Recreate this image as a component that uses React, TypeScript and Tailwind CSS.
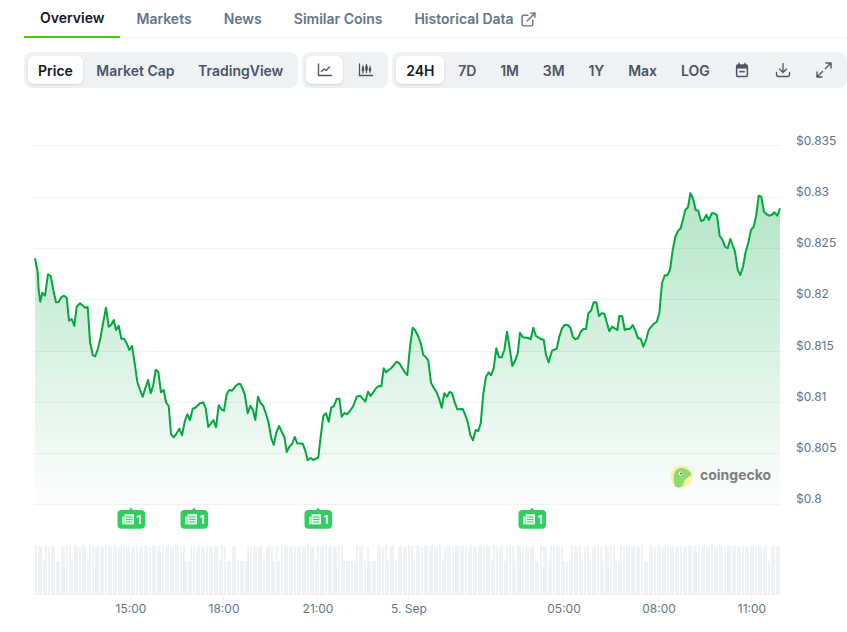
import { ExternalLink } from "lucide-react";

const part1 = [45,55,53,95,56,150,61,185,67,158,75,167,84,103,92,108,100,150,108,187,116,186,124,172,132,167,140,173,147,242,155,237,163,258,170,200,180,190,196,203,203,201,210,305,218,345,226,349,234,325,242,290,250,245,258,203,266,260,274,254,281,240,288,270,296,257,304,296,312,296,320,310,328,330,336,318,344,370,352,425,360,450,368,470,376,445,384,420,392,460,400,435,407,389,415,396,423,457,431,450,438,487,446,498,453,582,461,592,470,580,478,566,486,586,494,545,502,523,510,540,518,506,526,503,540,490,550,487,557,505,565,561,573,550,580,540,588,562,596,496,604,508,612,512,620,462,628,450,636,452,648,437,656,431,662,433,674,462,683,520,691,497,699,510,706,540,714,470,722,490,730,498,738,522,746,550,754,595,761,615,769,578,777,558,785,575,793,590,800,636,808,620,816,612,824,591];
const part2 = [22,490,38,491,46,512,53,541,62,534,70,540,85,532,92,470,100,408,108,400,116,425,124,382,132,378,140,356,148,356,155,410,163,399,171,403,180,393,190,378,200,350,210,347,226,365,234,335,242,348,258,325,265,319,274,319,281,265,288,277,296,270,304,264,320,245,328,250,344,277,352,285,360,200,368,143,376,152,384,167,392,190,400,225,408,232,415,242,423,308,431,323,439,335,447,355,455,383,463,340,471,350,479,335,486,340,494,367,502,388,518,387,526,405,534,430,541,465,549,481,557,450,565,453,572,430,580,340,588,290,596,277,603,286,611,265,619,205,627,232,635,232,643,210,651,155,659,205,667,258,675,243,683,220,690,158,698,172,715,174,722,178,730,143,738,168,754,178];
const part3 = [11,509,18,555,26,577,36,542,50,536,58,500,66,475,74,465,84,465,92,475,98,500,106,508,114,505,122,485,130,477,138,477,145,430,153,422,161,397,169,397,177,438,185,430,193,431,201,460,208,484,216,470,224,475,232,480,238,438,247,439,254,480,262,476,270,477,278,465,286,482,294,505,302,506,310,530,318,510,326,480,334,470,342,461,350,456,358,430,366,340,374,316,382,316,390,300,398,240,406,200,414,183,422,175,430,145,436,120,444,112,451,70,459,85,467,120,475,122,483,153,491,150,499,134,507,150,515,130,523,130,531,136,539,198,547,208,555,230,563,235,571,207,579,228,585,245,593,300,601,315,609,290,617,245,625,218,633,180,641,170,649,135,656,77,664,80,672,125,680,133,688,137,696,134,703,127,712,137,720,115];

// traced from 3x crops, so map back to page pixels
function toPoints(raw: number[], ox: number, oy: number) {
  const out: string[] = [];
  for (let i = 0; i < raw.length; i += 2) {
    out.push(`${(ox + raw[i] / 3).toFixed(1)},${(oy + raw[i + 1] / 3).toFixed(1)}`);
  }
  return out;
}

const linePoints = [
  ...toPoints(part1, 20, 240),
  ...toPoints(part2, 290, 280),
  ...toPoints(part3, 540, 170),
].join(" ");
const areaPoints = `35,504 ${linePoints} 780,504`;

const gridYs = [145, 197, 248, 299, 351, 402, 453, 504];
const priceLabels = [
  ["$0.835", 145],
  ["$0.83", 196],
  ["$0.825", 247],
  ["$0.82", 298],
  ["$0.815", 350],
  ["$0.81", 401],
  ["$0.805", 452],
  ["$0.8", 503],
] as const;
const timeLabels = [
  ["15:00", 130.5],
  ["18:00", 223.5],
  ["21:00", 317.5],
  ["5. Sep", 408.5],
  ["05:00", 563.5],
  ["08:00", 658.5],
  ["11:00", 751.5],
] as const;
const newsXs = [131, 194, 318, 532];

const shortBars = [
  [43, 45], [56, 60], [71, 73], [87, 89], [184, 190], [192, 193], [217, 220], [226, 230],
  [237, 246], [263, 266], [272, 274], [277, 280], [313, 317], [343, 347], [348, 355],
  [362, 367], [368, 375], [386, 388], [393, 396], [412, 414], [441, 443], [491, 493],
  [503, 506], [513, 516], [535, 540], [547, 550], [562, 571], [580, 584], [588, 591],
  [601, 605], [614, 619], [643, 647], [766, 771],
];

const volumeBars = Array.from({ length: 288 }, (_, i) => {
  const x = Math.round(35 + i * 2.59);
  const isShort = shortBars.some(([a, b]) => x >= a && x < b);
  const top = isShort ? 561 : 545 + ((i * 7) % 3);
  return { x, top };
});

function ChartLineIcon() {
  return (
    <svg width="16" height="16" viewBox="0 0 16 16" fill="none" stroke="#4b5565" strokeWidth="1.4" strokeLinecap="round" strokeLinejoin="round">
      <path d="M1.5 2v11.5h13" />
      <path d="M4.5 9.5l2.5-2.5 2 1.5 3.5-3.5" />
    </svg>
  );
}

function CandleIcon() {
  return (
    <svg width="16" height="16" viewBox="0 0 16 16" fill="none" stroke="#4b5565" strokeWidth="1.3" strokeLinecap="round">
      <path d="M1.5 2v11.5h13" />
      <path d="M5 4v7M8.5 2.5v8M12 4.5v6" />
      <path d="M5 5.5v3.5M8.5 4v4.5M12 6v3" strokeWidth="2.4" strokeLinecap="butt" />
    </svg>
  );
}

function CalendarIcon() {
  return (
    <svg width="16" height="16" viewBox="0 0 16 16" fill="none">
      <path d="M2.6 4.2a1.2 1.2 0 0 1 1.2-1.2h8.4a1.2 1.2 0 0 1 1.2 1.2v9.1a1.2 1.2 0 0 1-1.2 1.2H3.8a1.2 1.2 0 0 1-1.2-1.2z" stroke="#4b5565" strokeWidth="1.5" />
      <path d="M3 3.2h10v3.4H3z" fill="#4b5565" />
      <path d="M5 1.3v2.5M11 1.3v2.5" stroke="#4b5565" strokeWidth="1.5" strokeLinecap="round" />
      <path d="M5.2 9.6h5.6" stroke="#4b5565" strokeWidth="1.6" />
    </svg>
  );
}

function DownloadIcon() {
  return (
    <svg width="16" height="16" viewBox="0 0 16 16" fill="none" stroke="#4b5565" strokeWidth="1.3" strokeLinecap="round" strokeLinejoin="round">
      <path d="M8 1.5v8.5M4.5 7L8 10.5 11.5 7" />
      <path d="M1.5 10.5v2a2 2 0 0 0 2 2h9a2 2 0 0 0 2-2v-2" />
    </svg>
  );
}

function ExpandIcon() {
  return (
    <svg width="16" height="16" viewBox="0 0 16 16" fill="none" stroke="#4b5565" strokeWidth="1.4" strokeLinecap="round" strokeLinejoin="round">
      <path d="M10 1h5v5M15 1L9.5 6.5" />
      <path d="M6 15H1v-5M1 15l5.5-5.5" />
    </svg>
  );
}

function NewsFlag({ cx }: { cx: number }) {
  const left = cx - 13.5;
  return (
    <g>
      <rect x={left} y={510} width={27.5} height={18.7} rx={4} fill="#2fcf5f" />
      <path d={`M${cx - 2.5} 510.5 L${cx} 507.5 L${cx + 2.5} 510.5 Z`} fill="#2fcf5f" />
      <rect x={left + 7} y={514} width={9.5} height={10.5} rx={0.8} fill="#ffffff" fillOpacity={0.85} />
      <rect x={left + 4.5} y={516.5} width={2.5} height={8} rx={0.8} fill="#ffffff" fillOpacity={0.7} />
      <path d={`M${left + 8.5} 517h6.5M${left + 8.5} 519.5h6.5M${left + 8.5} 522h6.5`} stroke="#2fcf5f" strokeWidth="0.9" />
      <text x={left + 19} y={523.6} className="fill-white text-[12px] font-semibold">1</text>
    </g>
  );
}

function Tab({ label, active = false }: { label: string; active?: boolean }) {
  return (
    <div
      className={
        active
          ? "px-4 h-[38px] flex items-center whitespace-nowrap text-sm font-semibold text-[#111827] border-b-2 border-[#4bcc00]"
          : "px-4 h-[38px] flex items-center whitespace-nowrap text-sm font-semibold text-[#64748b]"
      }
    >
      {label}
    </div>
  );
}

function Segment({ label, active = false }: { label: string; active?: boolean }) {
  return (
    <div
      className={
        active
          ? "h-7 px-2.5 pt-0.5 flex items-center whitespace-nowrap rounded-md bg-white text-sm font-semibold text-[#111827] shadow-sm"
          : "h-7 px-2.5 pt-0.5 flex items-center whitespace-nowrap rounded-md text-sm font-semibold text-[#4b5565]"
      }
    >
      {label}
    </div>
  );
}

function IconSegment({ children, active = false }: { children: React.ReactNode; active?: boolean }) {
  return (
    <div
      className={
        active
          ? "h-7 w-[37px] flex items-center justify-center rounded-md bg-white shadow-sm"
          : "h-7 w-[37px] flex items-center justify-center rounded-md"
      }
    >
      {children}
    </div>
  );
}

export default function App() {
  return (
    <div className="w-[847px] h-[632px] overflow-hidden bg-white font-[family-name:Inter,sans-serif]">
      <div className="ml-6">
        <div className="flex h-[38px] relative">
          <div className="absolute left-0 right-0 top-[37px] h-px bg-[#eff2f5]" />
          <div className="relative">
            <Tab label="Overview" active />
          </div>
          <Tab label="Markets" />
          <Tab label="News" />
          <Tab label="Similar Coins" />
          <div className="flex items-center">
            <Tab label="Historical Data" />
            <ExternalLink className="-ml-[10px] w-[17px] h-[17px] text-[#64748b]" strokeWidth={2} />
          </div>
        </div>

        <div className="flex gap-1 mt-3.5">
          <div className="flex gap-[3.5px] pl-1 pr-[4.75px] py-1 rounded-lg bg-[#eff2f5]">
            <Segment label="Price" active />
            <Segment label="Market Cap" />
            <Segment label="TradingView" />
          </div>
          <div className="flex gap-1 p-1 rounded-lg bg-[#eff2f5]">
            <IconSegment active><ChartLineIcon /></IconSegment>
            <IconSegment><CandleIcon /></IconSegment>
          </div>
          <div className="flex-1 flex gap-[3.8px] p-1 rounded-lg bg-[#eff2f5]">
            <Segment label="24H" active />
            <Segment label="7D" />
            <Segment label="1M" />
            <Segment label="3M" />
            <Segment label="1Y" />
            <Segment label="Max" />
            <Segment label="LOG" />
            <IconSegment><CalendarIcon /></IconSegment>
            <IconSegment><DownloadIcon /></IconSegment>
            <IconSegment><ExpandIcon /></IconSegment>
          </div>
        </div>
      </div>

      {/* viewBox starts at y=88 so the chart can use page coordinates */}
      <svg width="847" height="544" viewBox="0 88 847 544" className="block">
        <defs>
          <linearGradient id="areaFill" x1="0" y1="193" x2="0" y2="504" gradientUnits="userSpaceOnUse">
            <stop offset="0" stopColor="#00a83e" stopOpacity="0.3" />
            <stop offset="1" stopColor="#00a83e" stopOpacity="0.01" />
          </linearGradient>
        </defs>

        {gridYs.map(y => (
          <line key={y} x1="34" x2="781" y1={y + 0.5} y2={y + 0.5} stroke="#eff2f5" />
        ))}
        <polygon points={areaPoints} fill="url(#areaFill)" />
        <polyline points={linePoints} fill="none" stroke="#00a83e" strokeWidth="2" strokeLinejoin="round" />

        {priceLabels.map(([label, y]) => (
          <text key={label} x="796" y={y} className="fill-[#64748b] text-xs">{label}</text>
        ))}

        {volumeBars.map(b => (
          <rect key={b.x} x={b.x} y={b.top} width="2" height={594 - b.top} fill="#eff2f5" />
        ))}
        <line x1="34" x2="781" y1="594.5" y2="594.5" stroke="#eff2f5" />

        {timeLabels.map(([label, x]) => (
          <g key={label}>
            <line x1={x} x2={x} y1="594" y2="604" stroke="#eff2f5" />
            <text x={x + 0.5} y="613" textAnchor="middle" className="fill-[#64748b] text-xs">{label}</text>
          </g>
        ))}

        {newsXs.map(x => (
          <NewsFlag key={x} cx={x} />
        ))}

        <g>
          <circle cx="681.5" cy="476.5" r="11" fill="#f8f0a8" />
          <path d="M675 486.5C673 479 673 470 679 468.5C684 467 689 470 691.5 474.5C687 478 684.5 479 684 482.5C683.5 485.5 681 487.5 678 487.5Z" fill="#8ddb6a" />
          <circle cx="680.5" cy="473.5" r="2" fill="#ffffff" />
          <circle cx="681" cy="473.5" r="1" fill="#4b5565" />
          <text x="700" y="480" className="fill-[#7f7f7f] text-[14px] font-bold">coingecko</text>
        </g>
      </svg>
    </div>
  );
}
